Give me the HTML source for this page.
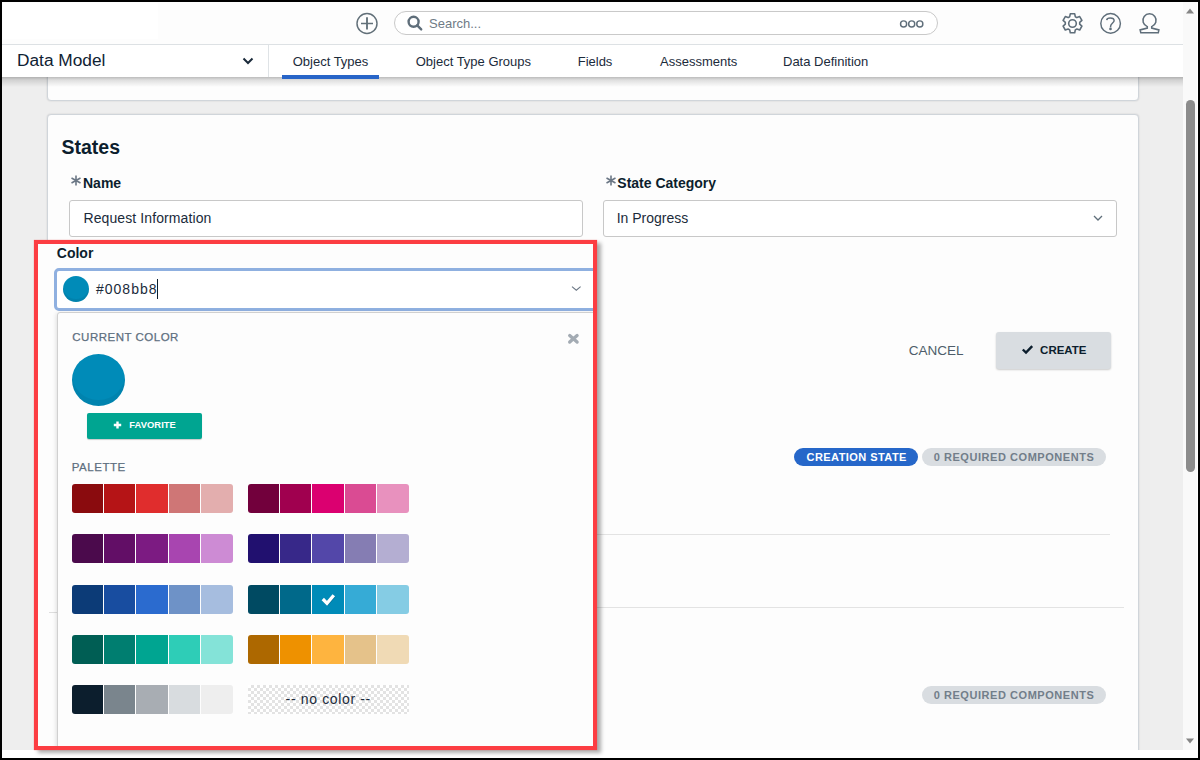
<!DOCTYPE html>
<html><head><meta charset="utf-8">
<style>
*{box-sizing:border-box;margin:0;padding:0}
html,body{width:1200px;height:760px;overflow:hidden;background:#000;font-family:"Liberation Sans",sans-serif;position:relative;-webkit-font-smoothing:antialiased}
.a{position:absolute}
.t{position:absolute;white-space:nowrap;line-height:1}
.sw{position:absolute;height:29px;display:flex;gap:1px;border-radius:3px;overflow:hidden}
.sw i{display:block;flex:1}
</style></head><body>
<!-- base white -->
<div class="a" style="left:2px;top:2px;width:1196px;height:756px;background:#fff"></div>
<!-- content grey bg -->
<div class="a" style="left:2px;top:77px;width:1181px;height:673px;background:#eeeeee"></div>
<!-- scrollbar track -->
<div class="a" style="left:1183px;top:2px;width:14px;height:748px;background:#f9f9f9"></div>
<div class="a" style="left:1186px;top:100px;width:9px;height:372px;background:#8c8c8c;border-radius:5px"></div>
<svg class="a" style="left:1183px;top:2px" width="14" height="14"><path d="M3 11.5 L7 6.5 L11 11.5 Z" fill="#858585"/></svg>
<svg class="a" style="left:1183px;top:734px" width="14" height="14"><path d="M3 4.5 L7 9.5 L11 4.5 Z" fill="#858585"/></svg>

<!-- top card (cut) -->
<div class="a" style="left:2px;top:2px;width:1181px;height:748px;overflow:hidden">
<div class="a" style="left:45px;top:38px;width:1092px;height:61px;background:#fdfdfd;border:1px solid #d0d5da;border-radius:4px;box-shadow:0 0 2px rgba(0,0,0,.14)"></div>
<!-- states card -->
<div class="a" style="left:45px;top:112px;width:1092px;height:700px;background:#fdfdfd;border:1px solid #d0d5da;border-radius:4px;box-shadow:0 0 2px rgba(0,0,0,.14)"></div>
</div>

<!-- header -->
<div class="a" style="left:2px;top:2px;width:1181px;height:43px;background:#fdfdfd;border-bottom:1px solid #dde1e4"></div>
<div class="a" style="left:3px;top:3px;width:155px;height:36px;background:#fff"></div>
<!-- nav -->
<div class="a" style="left:2px;top:77px;width:1181px;height:10px;background:linear-gradient(rgba(0,0,0,.26),rgba(0,0,0,.12) 30%,rgba(0,0,0,0))"></div>
<div class="a" style="left:2px;top:45px;width:1181px;height:32px;background:#fff"></div>
<div class="a" style="left:268px;top:45px;width:1px;height:32px;background:#dfe3e6"></div>
<div class="a" style="left:282px;top:74.6px;width:97px;height:4.2px;background:#2865c8"></div>

<!-- header icons -->
<svg class="a" style="left:355px;top:12px" width="24" height="24" viewBox="0 0 24 24"><circle cx="12" cy="11.5" r="10" fill="none" stroke="#627079" stroke-width="1.45"/><path d="M12 5.3V17.6" stroke="#627079" stroke-width="1.85"/><path d="M6 11.5H18" stroke="#627079" stroke-width="1.5"/></svg>
<div class="a" style="left:394px;top:11px;width:544px;height:24px;border:1px solid #c9c9c9;border-radius:12px;background:#fff"></div>
<svg class="a" style="left:406px;top:14px" width="18" height="18" viewBox="0 0 18 18"><circle cx="7.6" cy="7.8" r="5" fill="none" stroke="#5f6e7a" stroke-width="2.4"/><path d="M11.2 11.4L15.2 15.4" stroke="#5f6e7a" stroke-width="2.4" stroke-linecap="round"/></svg>
<div class="t" style="left:429px;top:17px;font-size:13px;color:#6f7b86">Search...</div>
<svg class="a" style="left:898px;top:19px" width="28" height="10" viewBox="0 0 28 10"><g fill="none" stroke="#5f6e7a" stroke-width="1.45"><circle cx="5.6" cy="4.9" r="3.05"/><circle cx="13.7" cy="4.9" r="3.05"/><circle cx="21.8" cy="4.9" r="3.05"/></g></svg>
<!-- gear -->
<svg class="a" style="left:1061.3px;top:12px" width="23" height="23" viewBox="0 0 23 23"><g fill="none" stroke="#5f6e7a" stroke-width="1.6" stroke-linejoin="round"><path d="M9.3 1.8h4.4l.6 2.9 1.6.9 2.8-1 2.2 3.8-2.2 2v1.8l2.2 2-2.2 3.8-2.8-1-1.6.9-.6 2.9H9.3l-.6-2.9-1.6-.9-2.8 1-2.2-3.8 2.2-2v-1.8l-2.2-2 2.2-3.8 2.8 1 1.6-.9z"/><circle cx="11.5" cy="11.5" r="3.8"/></g></svg>
<!-- help -->
<svg class="a" style="left:1099px;top:12px" width="23" height="23" viewBox="0 0 23 23"><circle cx="11.6" cy="11.4" r="9.8" fill="none" stroke="#5f6e7a" stroke-width="1.45"/><path d="M7.7 8.1C7.9 6.4 9.4 6.1 11.3 6.1C13.5 6.1 15.1 7.1 15.1 8.8C15.1 10.8 11.6 11.4 11.6 14.2V15.3" fill="none" stroke="#5f6e7a" stroke-width="1.5"/><circle cx="11.5" cy="16.9" r="1.35" fill="#5f6e7a"/></svg>
<!-- user -->
<svg class="a" style="left:1138px;top:12px" width="23" height="23" viewBox="0 0 23 23"><path d="M9.3 14.6V16.1L2.1 17.9L2.8 20.8H20.3L20.9 17.9L13.7 16.1V14.6A6.6 6.6 0 1 0 9.3 14.6Z" fill="none" stroke="#5f6e7a" stroke-width="1.5" stroke-linejoin="miter"/></svg>

<!-- nav text -->
<div class="t" style="left:17px;top:52.3px;font-size:17.3px;color:#0f2233">Data Model</div>
<svg class="a" style="left:241px;top:55px" width="14" height="12" viewBox="0 0 14 12"><path d="M2.5 3.5L7 8L11.5 3.5" fill="none" stroke="#1b2b3b" stroke-width="2"/></svg>
<div class="t" style="left:292.7px;top:54.7px;font-size:13px;color:#1b2b3b">Object Types</div>
<div class="t" style="left:415.7px;top:54.7px;font-size:13px;color:#1b2b3b">Object Type Groups</div>
<div class="t" style="left:577.7px;top:54.7px;font-size:13px;color:#1b2b3b">Fields</div>
<div class="t" style="left:660px;top:54.7px;font-size:13px;color:#1b2b3b">Assessments</div>
<div class="t" style="left:783px;top:54.7px;font-size:13px;color:#1b2b3b">Data Definition</div>

<!-- States card content -->
<div class="t" style="left:61.5px;top:137.5px;font-size:19.5px;font-weight:700;color:#0c1e2d">States</div>
<svg class="a" style="left:70px;top:175px" width="12" height="11" viewBox="0 0 12 11"><path d="M6 0.5V10.5M1.5 3L10.5 8M1.5 8L10.5 3" stroke="#6b7785" stroke-width="1.6"/></svg>
<div class="t" style="left:83px;top:176px;font-size:14px;font-weight:700;color:#0c1e2d">Name</div>
<svg class="a" style="left:604.5px;top:175px" width="12" height="11" viewBox="0 0 12 11"><path d="M6 0.5V10.5M1.5 3L10.5 8M1.5 8L10.5 3" stroke="#6b7785" stroke-width="1.6"/></svg>
<div class="t" style="left:617.3px;top:176.1px;font-size:14px;font-weight:700;color:#0c1e2d">State Category</div>

<div class="a" style="left:69px;top:200px;width:514px;height:37px;border:1px solid #c8c8c8;border-radius:3px;background:#fff"></div>
<div class="t" style="left:83.5px;top:211.2px;font-size:14px;color:#1b2b3b;letter-spacing:.1px">Request Information</div>
<div class="a" style="left:603px;top:200px;width:514px;height:37px;border:1px solid #c8c8c8;border-radius:3px;background:#fff"></div>
<div class="t" style="left:616.7px;top:211px;font-size:14px;color:#1b2b3b">In Progress</div>
<svg class="a" style="left:1092px;top:213px" width="12" height="9" viewBox="0 0 12 9"><path d="M2 3L6 7L10 3" fill="none" stroke="#5f6e7a" stroke-width="1.3"/></svg>

<div class="t" style="left:908.7px;top:343.7px;font-size:13.5px;color:#4e5d6a">CANCEL</div>
<div class="a" style="left:996px;top:332px;width:115px;height:37px;background:#d9dde1;border-radius:3px;box-shadow:0 1px 2px rgba(0,0,0,.2)"></div>
<svg class="a" style="left:1021px;top:344px" width="13" height="11" viewBox="0 0 13 11"><path d="M1.8 5.5L5 8.6L11.2 2.2" fill="none" stroke="#0c1e2d" stroke-width="2.4"/></svg>
<div class="t" style="left:1040.1px;top:344.6px;font-size:11.5px;font-weight:700;color:#0c1e2d">CREATE</div>

<div class="a" style="left:794px;top:448px;width:124px;height:18px;background:#2667c9;border-radius:9px"></div>
<div class="t" style="left:806.5px;top:451.6px;font-size:11px;font-weight:700;color:#fff;letter-spacing:.45px">CREATION STATE</div>
<div class="a" style="left:922px;top:448px;width:184px;height:18px;background:#d9dde1;border-radius:9px"></div>
<div class="t" style="left:933.7px;top:451.7px;font-size:11px;font-weight:700;color:#727e8a;letter-spacing:.55px">0 REQUIRED COMPONENTS</div>

<div class="a" style="left:57px;top:534px;width:1053px;height:1px;background:#e3e3e3"></div>
<div class="a" style="left:48px;top:607px;width:1076px;height:1px;background:#e3e3e3"></div>

<div class="a" style="left:922px;top:686px;width:184px;height:18px;background:#d9dde1;border-radius:9px"></div>
<div class="t" style="left:933.7px;top:689.9px;font-size:11px;font-weight:700;color:#727e8a;letter-spacing:.55px">0 REQUIRED COMPONENTS</div>

<div class="a" style="left:2px;top:750px;width:1196px;height:8px;background:#fff"></div>
<!-- red annotation box -->
<div class="a" style="left:34px;top:239.5px;width:563px;height:510px;box-shadow:4px 3px 4px rgba(0,0,0,.32)"></div>
<div class="a" style="left:38px;top:243.5px;width:555px;height:502px;background:#fdfdfd;overflow:hidden">
  <div class="a" style="left:10.7px;top:368.5px;width:12px;height:1px;background:#dedede"></div>
  <div class="t" style="left:18.8px;top:2.6px;font-size:14px;font-weight:700;color:#0c1e2d">Color</div>
  <div class="a" style="left:16.3px;top:24.5px;width:600px;height:43px;border:3px solid #8fb0e0;border-radius:5px;background:#fff"></div>
  <div class="a" style="left:25px;top:32.5px;width:26px;height:26px;border-radius:50%;background:#008bb8;box-shadow:inset 0 -3px 0 rgba(0,0,0,.06)"></div>
  <div class="t" style="left:58px;top:38.3px;font-size:14px;color:#1b2b3b;letter-spacing:1px">#008bb8</div>
  <div class="a" style="left:119px;top:35.5px;width:1px;height:20px;background:#0c1e2d"></div>
  <svg class="a" style="left:532px;top:40px" width="12" height="9" viewBox="0 0 12 9"><path d="M2 2.6L6.3 6.2L10.6 2.6" fill="none" stroke="#6b7785" stroke-width="1.1"/></svg>
  <!-- panel -->
  <div class="a" style="left:19px;top:68.2px;width:600px;height:500px;border:1px solid #d0d0d0;border-radius:3px;background:#fdfdfd;box-shadow:-1px 1px 4px rgba(0,0,0,.12)"></div>
  <div class="t" style="left:34.3px;top:88.5px;font-size:11.5px;font-weight:400;color:#5e6f7f;letter-spacing:.5px;-webkit-text-stroke:.25px #5e6f7f">CURRENT COLOR</div>
  <svg class="a" style="left:529px;top:89px" width="13" height="12" viewBox="0 0 13 12"><path d="M2.7 2.6L10.1 9.1M10.1 2.6L2.7 9.1" stroke="#a3abb3" stroke-width="3.3" stroke-linecap="round"/></svg>
  <div class="a" style="left:34px;top:110.5px;width:53px;height:52px;border-radius:50%;background:#008bb8;box-shadow:inset 0 -6px 0 rgba(0,0,0,.05)"></div>
  <div class="a" style="left:49.3px;top:169.5px;width:115px;height:26px;background:#00a591;border-radius:2px;box-shadow:0 1px 1px rgba(0,0,0,.2)"></div>
  <svg class="a" style="left:75px;top:177px" width="9" height="8" viewBox="0 0 9 8"><path d="M4.5 0.5V7.5M0.8 4H8.2" stroke="#fff" stroke-width="2.4"/></svg>
  <div class="t" style="left:91.3px;top:176.3px;font-size:9.4px;font-weight:700;color:#fff;letter-spacing:.05px">FAVORITE</div>
  <div class="t" style="left:33.7px;top:218.7px;font-size:11.5px;font-weight:400;color:#5e6f7f;letter-spacing:.55px;-webkit-text-stroke:.25px #5e6f7f">PALETTE</div>
</div>
<div class="sw" style="left:72px;top:484px;width:161px"><i style="background:#8a0b0e;flex:0 0 31px"></i><i style="background:#b51416;flex:0 0 31px"></i><i style="background:#e02d2d;flex:0 0 32px"></i><i style="background:#cf7676;flex:0 0 31px"></i><i style="background:#e3aeae;flex:0 0 32px"></i></div>
<div class="sw" style="left:248px;top:484px;width:161px"><i style="background:#72003c;flex:0 0 31px"></i><i style="background:#a0004f;flex:0 0 31px"></i><i style="background:#db0070;flex:0 0 32px"></i><i style="background:#da4b93;flex:0 0 31px"></i><i style="background:#e891be;flex:0 0 32px"></i></div>
<div class="sw" style="left:72px;top:534px;width:161px"><i style="background:#4b0a4c;flex:0 0 31px"></i><i style="background:#620e66;flex:0 0 31px"></i><i style="background:#7c1b82;flex:0 0 32px"></i><i style="background:#a845b0;flex:0 0 31px"></i><i style="background:#cd8bd4;flex:0 0 32px"></i></div>
<div class="sw" style="left:248px;top:534px;width:161px"><i style="background:#21106f;flex:0 0 31px"></i><i style="background:#372889;flex:0 0 31px"></i><i style="background:#5347a9;flex:0 0 32px"></i><i style="background:#857db3;flex:0 0 31px"></i><i style="background:#b4aed2;flex:0 0 32px"></i></div>
<div class="sw" style="left:72px;top:585px;width:161px"><i style="background:#0c3b77;flex:0 0 31px"></i><i style="background:#184da0;flex:0 0 31px"></i><i style="background:#2b6bcf;flex:0 0 32px"></i><i style="background:#6e92c7;flex:0 0 31px"></i><i style="background:#a6bddf;flex:0 0 32px"></i></div>
<div class="sw" style="left:248px;top:585px;width:161px"><i style="background:#004a62;flex:0 0 31px"></i><i style="background:#00698a;flex:0 0 31px"></i><i style="background:#008bb8;flex:0 0 32px"></i><i style="background:#36abd6;flex:0 0 31px"></i><i style="background:#85cce4;flex:0 0 32px"></i></div>
<div class="sw" style="left:72px;top:635px;width:161px"><i style="background:#005e54;flex:0 0 31px"></i><i style="background:#007e70;flex:0 0 31px"></i><i style="background:#00a591;flex:0 0 32px"></i><i style="background:#2ecdb7;flex:0 0 31px"></i><i style="background:#84e3d8;flex:0 0 32px"></i></div>
<div class="sw" style="left:248px;top:635px;width:161px"><i style="background:#ad6800;flex:0 0 31px"></i><i style="background:#ee9100;flex:0 0 31px"></i><i style="background:#feb43f;flex:0 0 32px"></i><i style="background:#e5c28a;flex:0 0 31px"></i><i style="background:#f0dab5;flex:0 0 32px"></i></div>
<div class="sw" style="left:72px;top:685px;width:161px"><i style="background:#0c1e2d;flex:0 0 31px"></i><i style="background:#7a858d;flex:0 0 31px"></i><i style="background:#a8adb3;flex:0 0 32px"></i><i style="background:#d8dcdf;flex:0 0 31px"></i><i style="background:#eeeeee;flex:0 0 32px"></i></div>
<svg class="a" style="left:318px;top:590px" width="20" height="20" viewBox="0 0 20 20"><path d="M4.8 9L9 13.3L15.8 5.3" fill="none" stroke="rgba(0,40,60,.25)" stroke-width="3.3" transform="translate(.4,.6)"/><path d="M4.8 9L9 13.3L15.8 5.3" fill="none" stroke="#fff" stroke-width="3.3"/></svg>
<div class="a" style="left:248px;top:685px;width:161px;height:29px;background-color:#fff;background-image:linear-gradient(45deg,#e3e3e3 25%,transparent 25%,transparent 75%,#e3e3e3 75%),linear-gradient(45deg,#e3e3e3 25%,transparent 25%,transparent 75%,#e3e3e3 75%);background-size:6px 6px;background-position:0 0,3px 3px"></div>
<div class="t" style="left:285.6px;top:691.9px;font-size:14px;color:#1b2b3b;letter-spacing:.65px">-- no color --</div>
<div class="a" style="left:33.8px;top:239.7px;width:563.6px;height:509.9px;border:4.25px solid #fc3d42;box-shadow:0 0 1px rgba(252,61,66,.6)"></div>
</body></html>
